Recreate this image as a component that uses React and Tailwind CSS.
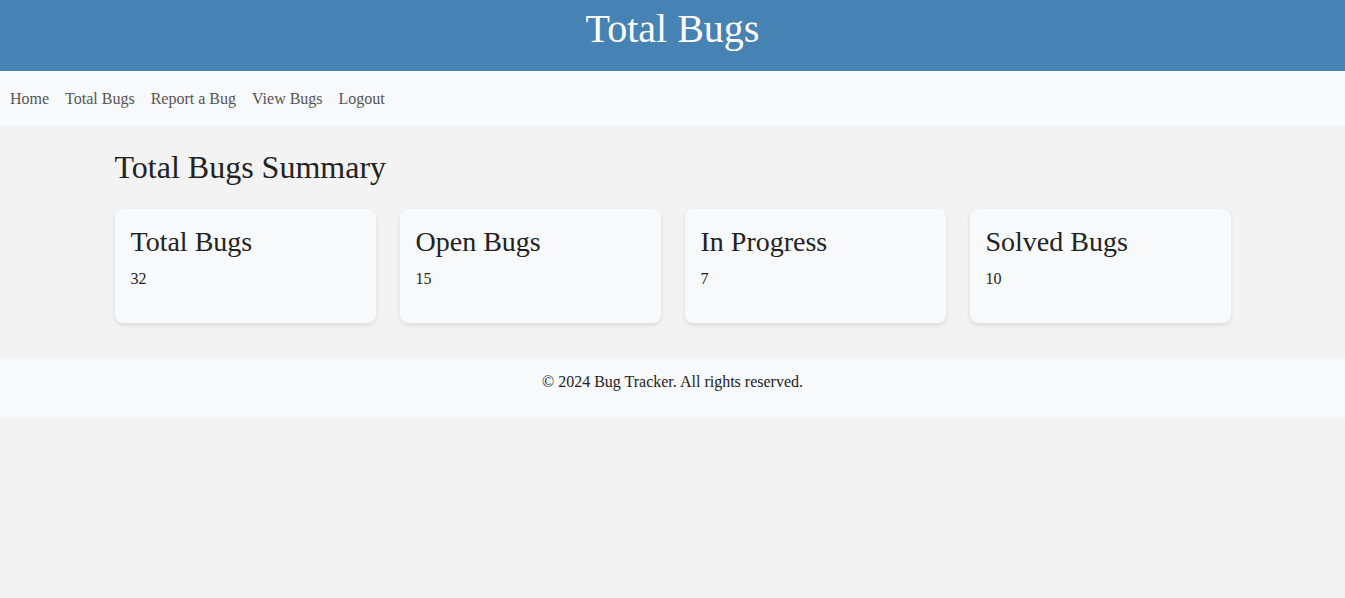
import React from 'react';

const stats = [
  { label: 'Total Bugs', value: 32 },
  { label: 'Open Bugs', value: 15 },
  { label: 'In Progress', value: 7 },
  { label: 'Solved Bugs', value: 10 },
];

const links = ['Home', 'Total Bugs', 'Report a Bug', 'View Bugs', 'Logout'];

const App = () => {
  return (
    <div className="min-h-[598px] bg-[#f3f3f3] font-['Liberation_Serif','Times_New_Roman',serif] text-[#222]">
      <header className="h-[71px] bg-[#4682b4] pt-[7px] text-center">
        <h1 className="text-[40px] leading-[44px] text-white">Total Bugs</h1>
      </header>

      <nav className="flex h-[55px] items-center gap-4 bg-[#f8f9fa] pl-[10px]">
        {links.map((link) => (
          <a key={link} href="#" className="text-[16px] text-[#555]">
            {link}
          </a>
        ))}
      </nav>

      <main className="mx-auto w-[1116px] pt-[23px] pb-[35px]">
        <h2 className="mb-[23px] text-[32px] leading-[37px]">Total Bugs Summary</h2>
        <div className="grid grid-cols-4 gap-6">
          {stats.map((s) => (
            <div
              key={s.label}
              className="h-[114px] rounded-lg bg-[#f8f9fa] px-4 pt-[17px] shadow-[0_2px_4px_rgba(0,0,0,0.1)]"
            >
              <h3 className="text-[28px] leading-[32px]">{s.label}</h3>
              <p className="mt-[12px] text-[16px] leading-[18px]">{s.value}</p>
            </div>
          ))}
        </div>
      </main>

      <footer className="h-[60px] bg-[#f8f9fa] pt-[15px] text-center text-[16px] leading-[18px]">
        © 2024 Bug Tracker. All rights reserved.
      </footer>
    </div>
  );
};

export default App;
